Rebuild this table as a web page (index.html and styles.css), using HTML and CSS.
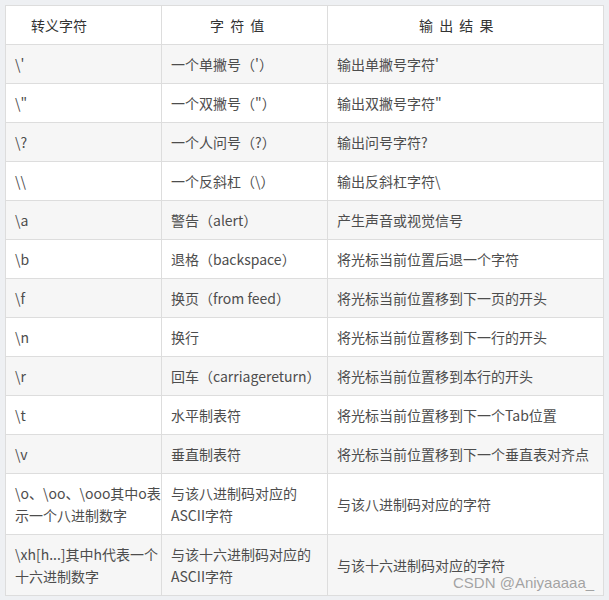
FILE: index.html
```html
<!DOCTYPE html>
<html lang="zh">
<head>
<meta charset="utf-8">
<link rel="stylesheet" href="styles.css">
</head>
<body>
<div class="wrap">
<table class="esc">
<colgroup><col class="c1"><col class="c2"><col class="c3"></colgroup>
<thead>
<tr class="head"><th class="h1">转义字符</th><th class="h2">字 符 值</th><th class="h3">输 出 结 果</th></tr>
</thead>
<tbody>
<tr class="odd"><td>\'</td><td>一个单撇号（'）</td><td>输出单撇号字符'</td></tr>
<tr><td>\"</td><td>一个双撇号（"）</td><td>输出双撇号字符"</td></tr>
<tr class="odd"><td>\?</td><td>一个人问号（?）</td><td>输出问号字符?</td></tr>
<tr><td>\\</td><td>一个反斜杠（\）</td><td>输出反斜杠字符\</td></tr>
<tr class="odd"><td>\a</td><td>警告（alert）</td><td>产生声音或视觉信号</td></tr>
<tr><td>\b</td><td>退格（backspace）</td><td>将光标当前位置后退一个字符</td></tr>
<tr class="odd"><td>\f</td><td>换页（from feed）</td><td>将光标当前位置移到下一页的开头</td></tr>
<tr><td>\n</td><td>换行</td><td>将光标当前位置移到下一行的开头</td></tr>
<tr class="odd"><td>\r</td><td>回车（carriagereturn）</td><td>将光标当前位置移到本行的开头</td></tr>
<tr><td>\t</td><td>水平制表符</td><td>将光标当前位置移到下一个Tab位置</td></tr>
<tr class="odd"><td>\v</td><td>垂直制表符</td><td>将光标当前位置移到下一个垂直表对齐点</td></tr>
<tr class="tall"><td>\o、\oo、\ooo其中o表<br>示一个八进制数字</td><td>与该八进制码对应的<br>ASCII字符</td><td>与该八进制码对应的字符</td></tr>
<tr class="odd tall"><td>\xh[h...]其中h代表一个<br>十六进制数字</td><td>与该十六进制码对应的<br>ASCII字符</td><td>与该十六进制码对应的字符</td></tr>
</tbody>
</table>
<div class="mark">CSDN @Aniyaaaaa_</div>
</div>
</body>
</html>
```
FILE: styles.css
```css
html, body {
  margin: 0;
  padding: 0;
  background: #eef0f3;
}
body {
  width: 609px;
  height: 600px;
  overflow: hidden;
}
.wrap {
  position: relative;
  padding: 5px 0 0 5px;
}
.esc {
  border-collapse: collapse;
  width: 598px;
  table-layout: fixed;
  background: #fff;
  font-family: "Microsoft YaHei", "Noto Sans CJK SC", sans-serif;
  font-size: 14px;
  color: #4d4d4d;
}
.c1 { width: 156px; }
.c2 { width: 166px; }
.c3 { width: 276px; }
.esc th, .esc td {
  border: 1px solid #dddddd;
  padding: 0 9px;
  height: 38px;
  line-height: 22px;
  text-align: left;
  vertical-align: middle;
  font-weight: normal;
  white-space: nowrap;
}
.esc th { color: #333; }
.esc .h1 { padding-left: 25px; }
.esc .h2 { padding-left: 48px; word-spacing: 3px; }
.esc .h3 { padding-left: 91px; word-spacing: 3px; }
.esc tr.odd td { background: #f6f6f6; }
.esc tr.tall td { height: 60px; }
.mark {
  position: absolute;
  left: 453px;
  top: 574px;
  font-family: "Liberation Sans", Arial, sans-serif;
  font-size: 15px;
  color: #a3a3a3;
  text-shadow: 0 0 1px #fff;
}
```
